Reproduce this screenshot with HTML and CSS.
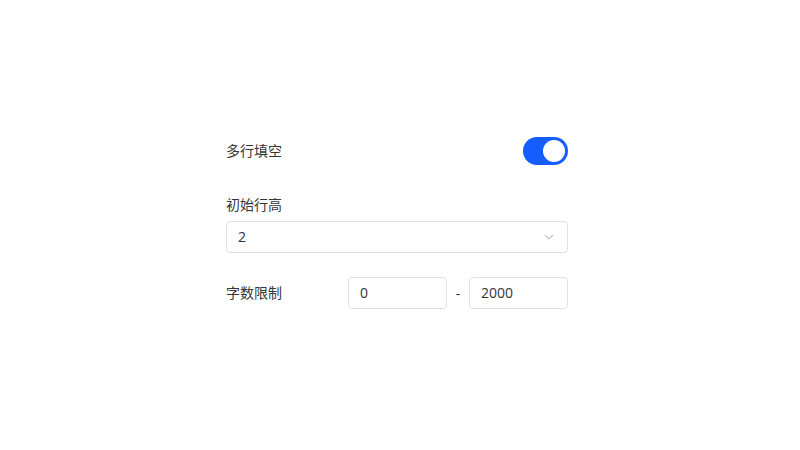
FILE: index.html
```html
<!DOCTYPE html>
<html lang="zh">
<head>
<meta charset="utf-8">
<title>多行填空设置</title>
<link rel="stylesheet" href="styles.css">
</head>
<body>
<div class="form">
  <div class="row-switch">
    <span class="label lift">多行填空</span>
    <div class="switch on"><span class="knob"></span></div>
  </div>
  <div class="field">
    <div class="label field-label">初始行高</div>
    <div class="select">
      <span class="value">2</span>
      <svg class="chevron" width="10" height="6" viewBox="0 0 10 6"><path d="M1 1 L5 5 L9 1" fill="none" stroke="#c3c6cc" stroke-width="1.1"/></svg>
    </div>
  </div>
  <div class="row-limit">
    <span class="label lift limit-label">字数限制</span>
    <div class="input"><span class="value">0</span></div>
    <span class="dash">-</span>
    <div class="input"><span class="value">2000</span></div>
  </div>
</div>
</body>
</html>
```
FILE: styles.css
```css
html, body {
  margin: 0;
  padding: 0;
  background: #ffffff;
}
body {
  font-family: "Open Sans", "Noto Sans CJK SC", sans-serif;
  font-size: 14px;
  color: #333333;
}
.form {
  width: 342px;
  margin-left: 226px;
  padding-top: 137px;
}
.label {
  font-family: "Noto Sans CJK SC", sans-serif;
  font-size: 14px;
  line-height: 22px;
  color: #363636;
}
.lift {
  padding-bottom: 3px;
}
.row-switch {
  display: flex;
  justify-content: space-between;
  align-items: center;
  height: 28px;
}
.switch {
  width: 45px;
  height: 28px;
  border-radius: 14px;
  background: #165dff;
  display: flex;
  align-items: center;
  justify-content: flex-end;
  padding: 0 3px;
  box-sizing: border-box;
}
.knob {
  width: 22px;
  height: 22px;
  border-radius: 50%;
  background: #ffffff;
}
.field {
  margin-top: 28px;
}
.field-label {
  margin-bottom: 6px;
}
.select, .input {
  height: 32px;
  box-sizing: border-box;
  border: 1px solid #dfe1e5;
  border-radius: 4px;
  display: flex;
  align-items: center;
  padding: 0 11px;
}
.select {
  justify-content: space-between;
  padding-right: 13px;
}
.value {
  font-size: 14px;
  line-height: 20px;
  color: #333333;
}
.chevron {
  display: block;
}
.row-limit {
  margin-top: 24px;
  display: flex;
  align-items: center;
}
.limit-label {
  width: 122px;
}
.input {
  width: 99px;
}
.dash {
  width: 22px;
  text-align: center;
  font-size: 14px;
  color: #333333;
}
```
